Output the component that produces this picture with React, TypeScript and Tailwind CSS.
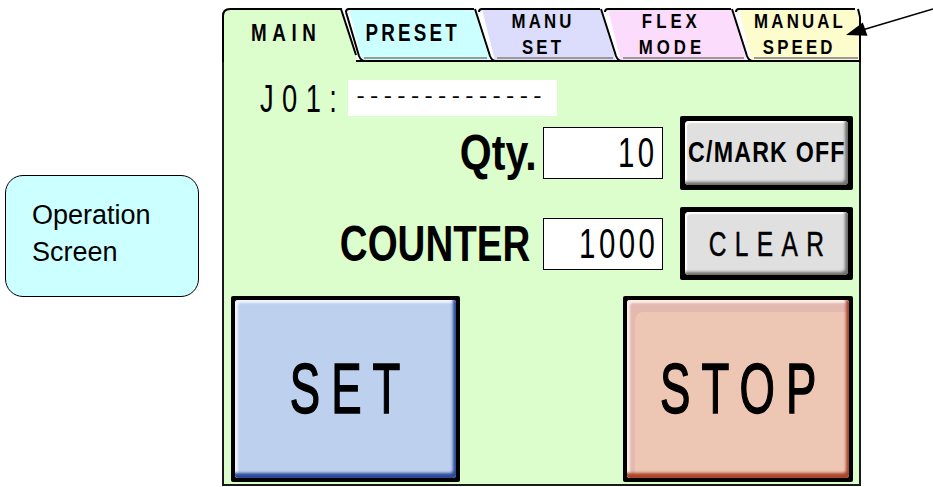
import React from "react";

function TabShapes() {
  return (
    <svg
      className="absolute left-0 top-0"
      width="639"
      height="54"
      viewBox="0 0 639 54"
    >
      {/* MAIN (active) */}
      <path d="M1,54 L1,8 Q1,1 8,1 L119,1 L136,54 Z" fill="#dcfdcc" />
      <path
        d="M1,54 L1,8 Q1,1 8,1 L119,1 L134,47"
        fill="none"
        stroke="#000"
        strokeWidth="2"
      />
      {/* PRESET */}
      <path d="M127,1 L252,1 L268,53 L140,53 Z" fill="#ccffff" />
      <path d="M142,50 L265,50" stroke="#9a9a9a" strokeWidth="2" />
      <path
        d="M124,4 Q124,1 127,1 L252,1 M124,4 L137,48 Q139,53 143,53"
        fill="none"
        stroke="#000"
        strokeWidth="2"
      />
      {/* MANU SET */}
      <path d="M260,1 L378,1 L394,53 L273,53 Z" fill="#dcdcfc" />
      <path d="M275,50 L391,50" stroke="#9a9a9a" strokeWidth="2" />
      <path
        d="M257,4 Q257,1 260,1 L378,1 M253,1 L268,48 Q270,53 274,53"
        fill="none"
        stroke="#000"
        strokeWidth="2"
      />
      {/* FLEX MODE */}
      <path d="M386,1 L509,1 L525,53 L399,53 Z" fill="#fcdcfc" />
      <path d="M401,50 L522,50" stroke="#9a9a9a" strokeWidth="2" />
      <path
        d="M383,4 Q383,1 386,1 L509,1 M379,1 L394,48 Q396,53 400,53"
        fill="none"
        stroke="#000"
        strokeWidth="2"
      />
      {/* MANUAL SPEED */}
      <path d="M517,1 L633,1 L638,9 L638,53 L530,53 Z" fill="#fcfccc" />
      <path d="M532,50 L636,50" stroke="#9a9a9a" strokeWidth="2" />
      <path
        d="M514,4 Q514,1 517,1 L633,1 M636,1 L638,9 L638,54 M510,1 L525,48 Q527,53 531,53"
        fill="none"
        stroke="#000"
        strokeWidth="2"
      />
      {/* bottom line under inactive tabs */}
      <path d="M134,53 L639,53" stroke="#000" strokeWidth="2" />
    </svg>
  );
}

export default function App() {
  return (
    <div className="relative flex w-[933px] h-[487px] overflow-hidden bg-white">
      {/* Callout */}
      <div className="w-[222px] shrink-0 pl-[5px] pt-[175px]">
        <div className="w-[194px] h-[122px] rounded-[18px] border-[1.5px] border-black bg-[#ccffff] pl-[26px] pt-[21px] font-['Liberation_Sans',Arial,sans-serif] text-[27px] leading-[37px] text-black">
          <div>Operation</div>
          <div>Screen</div>
        </div>
      </div>

      {/* HMI panel */}
      <div className="mt-[8px] flex h-[478px] w-[639px] shrink-0 flex-col text-black font-['Liberation_Sans',Arial,sans-serif]">
        {/* Tabs */}
        <div className="relative h-[54px]">
          <TabShapes />
          <div className="relative flex h-full pb-[3px] font-bold">
            <div className="flex w-[123px] items-center justify-center text-[23.5px] leading-none">
              <span className="inline-block scale-x-[0.8] whitespace-nowrap pl-[7px] tracking-[7px]">
                MAIN
              </span>
            </div>
            <div className="flex w-[133px] items-center justify-center text-[23.5px] leading-none">
              <span className="inline-block scale-x-[0.8] whitespace-nowrap pl-[4px] tracking-[4px]">
                PRESET
              </span>
            </div>
            <div className="flex w-[126px] flex-col items-center justify-center text-[21px] leading-[26px]">
              <span className="inline-block scale-x-[0.8] whitespace-nowrap pl-[4px] tracking-[4px]">
                MANU
              </span>
              <span className="inline-block scale-x-[0.8] whitespace-nowrap pl-[4px] tracking-[4px]">
                SET
              </span>
            </div>
            <div className="flex w-[131px] flex-col items-center justify-center text-[21px] leading-[26px]">
              <span className="inline-block scale-x-[0.8] whitespace-nowrap pl-[5px] tracking-[5px]">
                FLEX
              </span>
              <span className="inline-block scale-x-[0.8] whitespace-nowrap pl-[5px] tracking-[5px]">
                MODE
              </span>
            </div>
            <div className="flex w-[126px] flex-col items-center justify-center text-[21px] leading-[26px]">
              <span className="inline-block scale-x-[0.8] whitespace-nowrap pl-[4px] tracking-[4px]">
                MANUAL
              </span>
              <span className="inline-block scale-x-[0.8] whitespace-nowrap pl-[4px] tracking-[4px]">
                SPEED
              </span>
            </div>
          </div>
        </div>

        {/* Body */}
        <div className="flex flex-1 flex-col border-x-2 border-b-2 border-[#1a1a1a] bg-[#dcfdcc]">
          {/* J01 row */}
          <div className="mt-[18px] flex h-[36px] items-center pl-[36px]">
            <div className="w-[88px] text-[39px] leading-none">
              <span className="inline-block origin-left scale-x-[0.7] whitespace-nowrap tracking-[12px]">
                J01:
              </span>
            </div>
            <div className="flex h-[36px] w-[209px] items-center bg-white pl-[6px] font-['Liberation_Mono',monospace] text-[22px] leading-none tracking-[0.4px]">
              --------------
            </div>
          </div>

          {/* Qty row */}
          <div className="flex h-[73px] items-center justify-end pr-[6px]">
            <div className="mr-[6px] text-[50px] font-bold leading-none">
              <span className="inline-block origin-right scale-x-[0.82] whitespace-nowrap">
                Qty.
              </span>
            </div>
            <div className="flex h-[52px] w-[120px] shrink-0 items-center justify-end border border-black bg-white pr-[4px] text-[42px] leading-none">
              <span className="inline-block origin-right scale-x-[0.7] whitespace-nowrap tracking-[5px]">
                10
              </span>
            </div>
            <div className="ml-[17px] h-[74px] w-[173px] shrink-0 rounded-[2px] bg-black p-[5px]">
              <div className="flex h-full w-full items-center justify-center rounded-[4px] bg-[#e0e0e0] text-[29px] font-bold leading-none shadow-[inset_-3px_-3px_3px_#6e6e6e,inset_2px_2px_1px_#ffffff]">
                <span className="inline-block scale-x-[0.8] whitespace-nowrap pl-[1.5px] tracking-[1.5px]">
                  C/MARK OFF
                </span>
              </div>
            </div>
          </div>

          {/* Counter row */}
          <div className="mt-[18px] flex h-[73px] items-center justify-end pr-[6px]">
            <div className="mr-[13px] text-[50px] font-bold leading-none">
              <span className="inline-block origin-right scale-x-[0.77] whitespace-nowrap">
                COUNTER
              </span>
            </div>
            <div className="flex h-[52px] w-[120px] shrink-0 items-center justify-end border border-black bg-white pr-[4px] text-[42px] leading-none">
              <span className="inline-block origin-right scale-x-[0.7] whitespace-nowrap tracking-[5px]">
                1000
              </span>
            </div>
            <div className="ml-[17px] h-[73px] w-[173px] shrink-0 rounded-[2px] bg-black p-[5px]">
              <div className="flex h-full w-full items-center justify-center rounded-[4px] bg-[#e0e0e0] text-[35px] leading-none shadow-[inset_-3px_-3px_3px_#6e6e6e,inset_2px_2px_1px_#ffffff]">
                <span className="inline-block scale-x-[0.7] whitespace-nowrap pl-[12px] tracking-[12px] [-webkit-text-stroke:0.5px_#000]">
                  CLEAR
                </span>
              </div>
            </div>
          </div>

          {/* Big buttons */}
          <div className="mt-[16px] flex h-[186px] justify-between pl-[7px] pr-[6px]">
            <div className="h-[186px] w-[229px] rounded-[2px] bg-black p-[4px]">
              <div className="flex h-full w-full items-center justify-center rounded-[3px] bg-[#bdd0ee] text-[70px] leading-none shadow-[inset_-3px_-5px_3px_#2c4a98,inset_3px_3px_2px_#eef3fc]">
                <span className="inline-block scale-x-[0.65] whitespace-nowrap pl-[17px] tracking-[17px] [-webkit-text-stroke:1.5px_#000]">
                  SET
                </span>
              </div>
            </div>
            <div className="h-[186px] w-[230px] rounded-[2px] bg-black p-[4px]">
              <div className="flex h-full w-full items-center justify-center rounded-[3px] bg-[#eec7b4] text-[70px] leading-none shadow-[inset_-3px_-5px_3px_#a8452a,inset_3px_3px_2px_#fbeee8,inset_14px_18px_0_-6px_#e3b9b0]">
                <span className="inline-block scale-x-[0.65] whitespace-nowrap pl-[17px] tracking-[17px] [-webkit-text-stroke:1.5px_#000]">
                  STOP
                </span>
              </div>
            </div>
          </div>
        </div>
      </div>

      {/* Arrow */}
      <svg
        className="pointer-events-none absolute left-0 top-0"
        width="933"
        height="60"
        viewBox="0 0 933 60"
      >
        <line x1="933" y1="9" x2="864" y2="29.6" stroke="#000" strokeWidth="1.6" />
        <polygon points="846,35 867.5,35.8 862.8,22.4" fill="#000" />
      </svg>
    </div>
  );
}
